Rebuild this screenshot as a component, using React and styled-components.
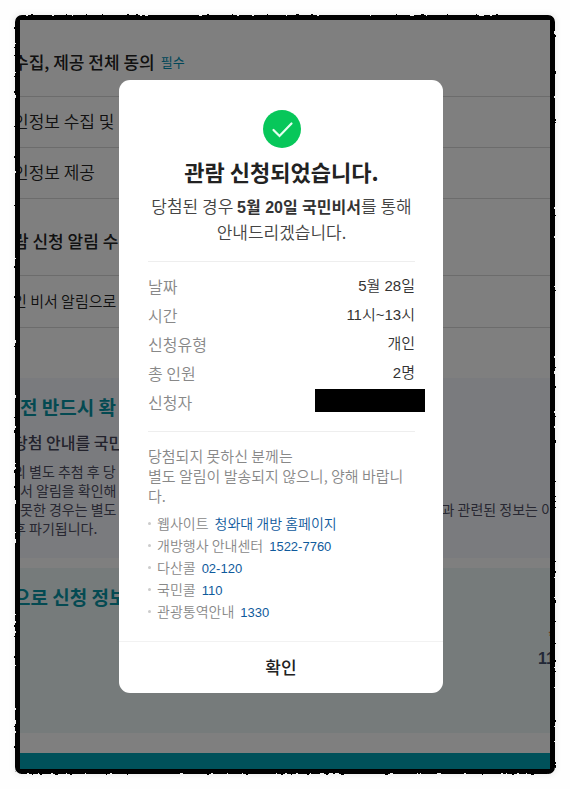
import React from 'react'
import styled, { createGlobalStyle } from 'styled-components'

const GlobalStyle = createGlobalStyle`
  * {
    box-sizing: border-box;
  }

  body {
    margin: 0;
    background: #fefefe;
    color: #222;
    font-family: "Noto Sans CJK KR", "Liberation Sans", sans-serif;
  }

  h1, h2, h3, p, ul, dl, dd {
    margin: 0;
    padding: 0;
  }
`;

const Frame = styled.div`
  position: relative;
  margin: 16px;
  border: 4px solid #000;
  border-radius: 5px;
  box-shadow: 0 0 6px 2px rgba(0, 0, 0, 0.08);
`;

const Edge = styled.svg`
  position: absolute;
  top: -10px;
  left: -10px;
  width: calc(100% + 20px);
  height: calc(100% + 20px);
  pointer-events: none;

  rect {
    width: calc(100% - 14px);
    height: calc(100% - 14px);
  }
`;

const Screen = styled.div`
  position: relative;
  overflow: hidden;
  background: #fff;
`;

const Page = styled.main`
  white-space: nowrap;
`;

const Row = styled.div`
  display: flex;
  align-items: center;
  height: ${props => props.$small ? '52px' : '51px'};
  padding-bottom: 3px;
  border-bottom: 1px solid #d8d8d8;
  font-size: ${props => props.$small ? '15px' : '17px'};
  font-weight: 350;
`;

const HeadRow = styled(Row)`
  height: 77px;
  padding-top: 10px;
  font-weight: 500;
`;

/* cut lines start to the left of the visible area */
const Line = styled.span`
  display: block;
  margin-left: ${props => props.$cut ? '-7px' : '0'};
`;

const Required = styled.span`
  margin-left: 6px;
  color: #008fb3;
  font-size: 13px;
  font-weight: 400;
`;

const Panel = styled.section`
  margin-top: ${props => props.$first ? '50px' : '10px'};
  padding: 14px 0 20px;
  background: ${props => props.$color};
`;

const PanelTitle = styled.h2`
  color: #0894a5;
  font-size: 19px;
  font-weight: 700;
  line-height: 30px;
`;

const PanelLead = styled.h3`
  margin: 8px 0;
  color: #454559;
  font-size: 16px;
  font-weight: 500;
  line-height: 24px;
`;

const PanelText = styled.div`
  color: #505064;
  font-size: 14px;
  line-height: 19px;
`;

const Split = styled.div`
  display: flex;
  justify-content: space-between;
  margin-right: -4px;
`;

const Count = styled.p`
  margin: 14px -5px 0;
  padding-bottom: 43px;
  color: #45506e;
  font: 700 16px/22px "Liberation Sans", sans-serif;
  text-align: right;

  em {
    display: block;
    color: #f08040;
    font-style: normal;
  }
`;

const BottomBar = styled.div`
  height: 16px;
  margin-top: 20px;
  background: #00a2b4;
`;

const Overlay = styled.div`
  position: absolute;
  inset: 0;
  display: flex;
  align-items: flex-start;
  justify-content: center;
  padding: 60px 8px 0 0;
  background: rgba(0, 0, 0, 0.5);
`;

const Modal = styled.div`
  width: 324px;
  max-width: 90%;
  border-radius: 11px;
  background: #fff;
`;

const ModalBody = styled.div`
  padding: 30px 28px 19px 29px;
`;

const CheckIcon = styled.svg`
  display: block;
  width: 38px;
  height: 38px;
  margin: 0 auto;
`;

const Title = styled.h1`
  margin-top: 7px;
  font-size: 22px;
  font-weight: 700;
  line-height: 32px;
  text-align: center;
`;

const Description = styled.p`
  margin-top: 7px;
  color: #444;
  font-size: 17px;
  font-weight: 350;
  line-height: 24px;
  text-align: center;

  strong {
    color: #333;
    font-family: "Liberation Sans", "Noto Sans CJK KR", sans-serif;
    font-size: 16px;
    font-weight: 700;
  }
`;

const Details = styled.dl`
  display: grid;
  gap: 5px;
  margin-top: 17px;
  padding: 12px 0 17px;
  border: solid #eee;
  border-width: 1px 0;
`;

const Detail = styled.div`
  display: flex;
  align-items: center;
  justify-content: space-between;
  height: 24px;
  line-height: 24px;

  dt {
    color: #888;
    font-size: 16px;
    font-weight: 350;
  }

  dd {
    color: #333;
    font-family: "Liberation Sans", "Noto Sans CJK KR", sans-serif;
    font-size: 15px;
    font-weight: 350;
  }
`;

const Redacted = styled.span`
  display: block;
  width: 110px;
  height: 23px;
  margin: -3px -10px 0 0;
  background: #000;
`;

const Note = styled.p`
  padding-top: 14px;
  color: #888;
  font-size: 15px;
  font-weight: 350;
  line-height: 20px;
  word-break: break-all;
`;

const Contacts = styled.ul`
  margin-top: 6px;
  list-style: none;
`;

const Contact = styled.li`
  display: flex;
  align-items: baseline;
  gap: 6px;
  height: 22px;
  color: #888;
  font-size: 14px;
  font-weight: 350;
  line-height: 22px;

  &::before {
    content: '';
    align-self: center;
    width: 3px;
    height: 3px;
    border-radius: 50%;
    background: #ccc;
  }
`;

const ContactLink = styled.a`
  color: #0f5a9c;
  font-family: ${props => props.$phone ? '"Liberation Sans", sans-serif' : 'inherit'};
  font-size: ${props => props.$phone ? '13px' : '14px'};
  text-decoration: none;
`;

const Confirm = styled.button`
  display: block;
  width: 100%;
  height: 52px;
  padding: 0 0 3px;
  border: 0;
  border-top: 1px solid #f2f2f2;
  border-radius: 0 0 11px 11px;
  background: none;
  color: #222;
  font-family: inherit;
  font-size: 17px;
  font-weight: 500;
  cursor: pointer;
`;

const details = [
  ['날짜', '5월 28일'],
  ['시간', '11시~13시'],
  ['신청유형', '개인'],
  ['총 인원', '2명'],
  ['신청자', <Redacted />],
]

const contacts = [
  ['웹사이트', '청와대 개방 홈페이지', '#'],
  ['개방행사 안내센터', '1522-7760', 'tel:1522-7760'],
  ['다산콜', '02-120', 'tel:02-120'],
  ['국민콜', '110', 'tel:110'],
  ['관광통역안내', '1330', 'tel:1330'],
]

const Background = () => (
  <Page>
    <HeadRow><Line $cut>수집, 제공 전체 동의</Line><Required>필수</Required></HeadRow>
    <Row><Line $cut>인정보 수집 및</Line></Row>
    <Row><Line $cut>인정보 제공</Line></Row>
    <HeadRow><Line $cut>람 신청 알림 수</Line></HeadRow>
    <Row $small><Line $cut>인 비서 알림으로</Line></Row>

    <Panel $first $color="#f5f6fc">
      <PanelTitle><Line>전 반드시 확</Line></PanelTitle>
      <PanelLead><Line $cut>당첨 안내를 국민</Line></PanelLead>
      <PanelText>
        <Line $cut>의 별도 추첨 후 당</Line>
        <Line>서 알림을 확인해</Line>
        <Split>
          <Line>못한 경우는 별도</Line>
          <span>과 관련된 정보는 이</span>
        </Split>
        <Line $cut>후 파기됩니다.</Line>
      </PanelText>
    </Panel>

    <Panel $color="#edf7f7">
      <PanelTitle><Line $cut>으로 신청 정보</Line></PanelTitle>
      <Count><em>*</em>11</Count>
    </Panel>
    <BottomBar />
  </Page>
)

const Dialog = () => (
  <Modal role="dialog" aria-labelledby="dialog-title">
    <ModalBody>
      <CheckIcon viewBox="0 0 38 38" aria-hidden="true">
        <circle cx="19" cy="19" r="19" fill="#07c75a" />
        <path d="M10.5 20l6 6L28.5 13.5" fill="none" stroke="#e6fff0" strokeWidth="2.2" strokeLinecap="round" />
      </CheckIcon>
      <Title id="dialog-title">관람 신청되었습니다.</Title>
      <Description>
        당첨된 경우 <strong>5월 20일 국민비서</strong>를 통해<br />
        안내드리겠습니다.
      </Description>
      <Details>
        {details.map(([label, value]) => (
          <Detail key={label}>
            <dt>{label}</dt>
            <dd>{value}</dd>
          </Detail>
        ))}
      </Details>
      <Note>
        당첨되지 못하신 분께는<br />
        별도 알림이 발송되지 않으니, 양해 바랍니다.
      </Note>
      <Contacts>
        {contacts.map(([label, text, href]) => (
          <Contact key={label}>
            <span>{label}</span>
            <ContactLink href={href} $phone={href !== '#'}>{text}</ContactLink>
          </Contact>
        ))}
      </Contacts>
    </ModalBody>
    <Confirm type="button">확인</Confirm>
  </Modal>
)

const App = () => (
  <>
    <GlobalStyle />
    <Frame>
      <Edge aria-hidden="true">
        <filter id="rough" x="-5%" y="-5%" width="110%" height="110%">
          <feTurbulence type="fractalNoise" baseFrequency="0.2" numOctaves="2" seed="4" />
          <feDisplacementMap in="SourceGraphic" scale="3" xChannelSelector="R" yChannelSelector="G" />
        </filter>
        <rect x="7" y="7" rx="5" fill="none" stroke="#000" strokeWidth="4" filter="url(#rough)" />
      </Edge>
      <Screen>
        <Background />
        <Overlay>
          <Dialog />
        </Overlay>
      </Screen>
    </Frame>
  </>
)

export default App
